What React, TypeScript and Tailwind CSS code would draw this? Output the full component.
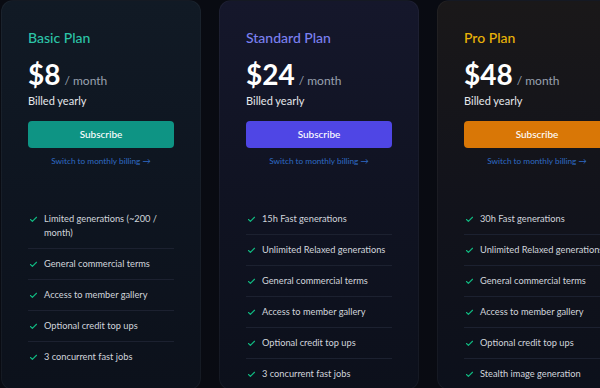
import React from 'react';

interface Plan {
    name: string;
    price: string;
    features: string[];
    titleClass: string;
    buttonClass: string;
    cardClass: string;
}

const plans: Plan[] = [
    {
        name: 'Basic Plan',
        price: '$8',
        features: [
            'Limited generations (~200 / month)',
            'General commercial terms',
            'Access to member gallery',
            'Optional credit top ups',
            '3 concurrent fast jobs',
        ],
        titleClass: 'text-[#2cc4a8]',
        buttonClass: 'bg-[#0e9484]',
        cardClass: 'bg-gradient-to-b from-[#111a25] via-[#0e1520] to-[#0c111b]',
    },
    {
        name: 'Standard Plan',
        price: '$24',
        features: [
            '15h Fast generations',
            'Unlimited Relaxed generations',
            'General commercial terms',
            'Access to member gallery',
            'Optional credit top ups',
            '3 concurrent fast jobs',
        ],
        titleClass: 'text-[#7b80f0]',
        buttonClass: 'bg-[#4f46e5]',
        cardClass: 'bg-gradient-to-b from-[#15172b] via-[#101322] to-[#0c101b]',
    },
    {
        name: 'Pro Plan',
        price: '$48',
        features: [
            '30h Fast generations',
            'Unlimited Relaxed generations',
            'General commercial terms',
            'Access to member gallery',
            'Optional credit top ups',
            'Stealth image generation',
        ],
        titleClass: 'text-[#eab308]',
        buttonClass: 'bg-[#d97706]',
        cardClass: 'bg-gradient-to-b from-[#1a1819] via-[#12131b] to-[#0c101b]',
    },
];

function Check() {
    return (
        <svg width="9" height="9" viewBox="0 0 24 24" fill="none" stroke="#10b981" strokeWidth="3" strokeLinecap="round" strokeLinejoin="round" className="shrink-0 mt-[3px]">
            <path d="M20 6 9 17l-5-5" />
        </svg>
    );
}

function PlanCard({ plan }: { plan: Plan }) {
    return (
        <div className={`w-[200px] shrink-0 rounded-xl border border-white/[0.04] ${plan.cardClass} px-[26px] pt-[27px]`}>
            {/* Header */}
            <div className={`text-[14px] leading-5 font-medium ${plan.titleClass}`}>{plan.name}</div>
            <div className="mt-[8px] flex items-baseline gap-[4px]">
                <span className="text-[28px] leading-9 font-bold text-white">{plan.price}</span>
                <span className="text-[12px] text-gray-400">/ month</span>
            </div>
            <div className="mt-[1px] text-[11px] leading-4 text-gray-200">Billed yearly</div>
            <button className={`mt-[12px] w-full h-[27px] rounded-[4px] ${plan.buttonClass} text-[10px] font-medium text-white`}>
                Subscribe
            </button>
            <div className="mt-[7px] text-center text-[8.25px] leading-3 text-[#2f6bc4]">Switch to monthly billing →</div>

            {/* Features */}
            <ul className="mt-[37px]">
                {plan.features.map((f, i) => (
                    <li key={f} className={`flex gap-[6px] pl-[1px] py-[8px] ${i > 0 ? 'border-t border-[#1c2130]' : ''}`}>
                        <Check />
                        <span className="text-[9.25px] leading-[14px] text-gray-300">{f}</span>
                    </li>
                ))}
            </ul>
        </div>
    );
}

export default function App() {
    return (
        <div className="h-[388px] w-[600px] overflow-hidden bg-[#090b12] font-['Lato',sans-serif]">
            <div className="flex gap-[18px] pl-[1px]">
                {plans.map((p) => (
                    <PlanCard key={p.name} plan={p} />
                ))}
            </div>
        </div>
    );
}
